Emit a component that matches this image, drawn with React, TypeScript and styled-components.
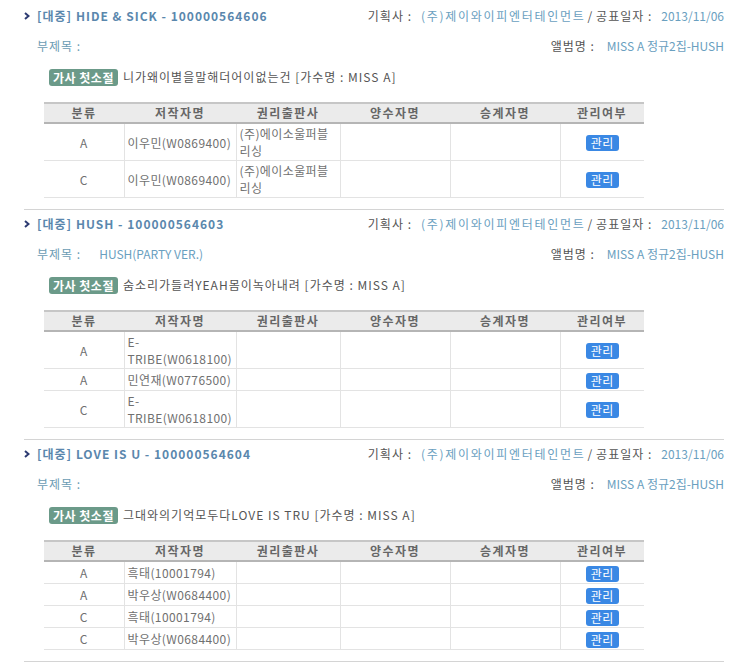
import styled, { createGlobalStyle } from 'styled-components';

const GlobalStyle = createGlobalStyle`
  body {
    margin: 0;
    background: #fff;
    font-family: 'Noto Sans CJK KR', 'Liberation Sans', sans-serif;
    font-size: 12px;
    letter-spacing: 1px;
    color: #555;
  }
`;

type Row = { kind: string; author: string; publisher?: string };
type Song = {
  title: string;
  sub: string;
  lyric: string;
  rows: Row[];
};

const songs: Song[] = [
  {
    title: '[대중] HIDE & SICK - 100000564606',
    sub: '',
    lyric: '니가왜이별을말해더어이없는건 [가수명 : MISS A]',
    rows: [
      { kind: 'A', author: '이우민(W0869400)', publisher: '(주)에이소울퍼블리싱' },
      { kind: 'C', author: '이우민(W0869400)', publisher: '(주)에이소울퍼블리싱' },
    ],
  },
  {
    title: '[대중] HUSH - 100000564603',
    sub: 'HUSH(PARTY VER.)',
    lyric: '숨소리가들려YEAH몸이녹아내려 [가수명 : MISS A]',
    rows: [
      { kind: 'A', author: 'E-TRIBE(W0618100)' },
      { kind: 'A', author: '민연재(W0776500)' },
      { kind: 'C', author: 'E-TRIBE(W0618100)' },
    ],
  },
  {
    title: '[대중] LOVE IS U - 100000564604',
    sub: '',
    lyric: '그대와의기억모두다LOVE IS TRU [가수명 : MISS A]',
    rows: [
      { kind: 'A', author: '흑태(10001794)' },
      { kind: 'A', author: '박우상(W0684400)' },
      { kind: 'C', author: '흑태(10001794)' },
      { kind: 'C', author: '박우상(W0684400)' },
    ],
  },
];

const Wrapper = styled.div`
  width: 700px;
  margin-left: 24px;
  padding-top: 2px;
`;

const Section = styled.section`
  padding: 4px 0 11px;
  border-bottom: 1px solid #d4d4d4;
`;

const TitleRow = styled.div`
  display: flex;
  justify-content: space-between;
  align-items: center;
  height: 20px;
  line-height: 20px;
`;

const Title = styled.h3`
  margin: 0;
  display: flex;
  align-items: center;
  gap: 7px;
  font-size: 12px;
  font-weight: bold;
  letter-spacing: 1px;
  color: #5a87ad;
`;

const InfoRow = styled.div`
  display: flex;
  justify-content: space-between;
  align-items: center;
  height: 20px;
  line-height: 20px;
  margin-top: 10px;
  padding-left: 13px;
`;

const Label = styled.span`
  color: #555;
`;

const SubLabel = styled.span`
  color: #6b9cb4;
`;

const Value = styled.span<{ $gap?: number; $spacing?: number }>`
  color: #6aa0c0;
  margin-left: ${(p) => p.$gap ?? 6}px;
  letter-spacing: ${(p) => p.$spacing ?? 0}px;
`;

const Slash = styled.span`
  color: #555;
  margin: 0 3px 0 2px;
`;

const LyricRow = styled.div`
  display: flex;
  align-items: center;
  gap: 5px;
  height: 20px;
  line-height: 20px;
  margin-top: 11px;
  padding-left: 25px;
  color: #555;
`;

const Badge = styled.span`
  display: inline-block;
  background: #6b9a89;
  color: #fff;
  font-weight: bold;
  font-size: 12px;
  letter-spacing: 0.5px;
  line-height: 17px;
  padding: 0 4px;
  border-radius: 3px;
`;

const Table = styled.table`
  margin: 15px 0 0 20px;
  width: 600px;
  border-collapse: collapse;
  table-layout: fixed;
`;

const Th = styled.th`
  height: 18px;
  padding: 0;
  line-height: 18px;
  background: #ebebeb;
  border-top: 2px solid #c6c6c6;
  border-bottom: 2px solid #b5b5b5;
  color: #666;
  font-weight: bold;
  letter-spacing: 1.5px;
  font-size: 12px;
`;

const Td = styled.td<{ $center?: boolean }>`
  height: 19px;
  padding: 1px 3px;
  line-height: 17px;
  letter-spacing: 0.4px;
  color: #707070;
  text-align: ${(p) => (p.$center ? 'center' : 'left')};
  border-bottom: 1px solid #e3e3e3;
  border-right: 1px solid #e3e3e3;
  vertical-align: middle;
  &:last-child {
    border-right: none;
  }
`;

const ManageButton = styled.span`
  display: inline-block;
  vertical-align: middle;
  background: #3a88e4;
  color: #fff;
  border-radius: 3px;
  padding: 0 5px;
  line-height: 16px;
  font-size: 12px;
  letter-spacing: 0.5px;
`;

const Chevron = () => (
  <svg width='6' height='8' viewBox='0 0 6 8'>
    <path d='M1 1 L4.5 4 L1 7' stroke='#2d3b72' strokeWidth='2' fill='none' />
  </svg>
);

const cols = [80, 112, 104, 110, 110, 84];
const heads = ['분류', '저작자명', '권리출판사', '양수자명', '승계자명', '관리여부'];

const SongBlock = ({ song }: { song: Song }) => (
  <Section>
    <TitleRow>
      <Title>
        <Chevron />
        {song.title}
      </Title>
      <span>
        <Label>기획사 :</Label>
        <Value $gap={9} $spacing={1.7}>
          (주)제이와이피엔터테인먼트
        </Value>
        <Slash>/</Slash>
        <Label>공표일자 :</Label>
        <Value $gap={9}>2013/11/06</Value>
      </span>
    </TitleRow>
    <InfoRow>
      <span>
        <SubLabel>부제목 :</SubLabel>
        <Value $gap={18}>{song.sub}</Value>
      </span>
      <span>
        <Label>앨범명 :</Label>
        <Value $gap={12}>MISS A 정규2집-HUSH</Value>
      </span>
    </InfoRow>
    <LyricRow>
      <Badge>가사 첫소절</Badge>
      {song.lyric}
    </LyricRow>
    <Table>
      <colgroup>
        {cols.map((w, i) => (
          <col key={i} style={{ width: w }} />
        ))}
      </colgroup>
      <thead>
        <tr>
          {heads.map((h) => (
            <Th key={h}>{h}</Th>
          ))}
        </tr>
      </thead>
      <tbody>
        {song.rows.map((r, i) => (
          <tr key={i}>
            <Td $center>{r.kind}</Td>
            <Td>{r.author}</Td>
            <Td>{r.publisher}</Td>
            <Td />
            <Td />
            <Td $center>
              <ManageButton>관리</ManageButton>
            </Td>
          </tr>
        ))}
      </tbody>
    </Table>
  </Section>
);

const App = () => (
  <>
    <GlobalStyle />
    <Wrapper>
      {songs.map((s) => (
        <SongBlock key={s.title} song={s} />
      ))}
    </Wrapper>
  </>
);

export default App;
